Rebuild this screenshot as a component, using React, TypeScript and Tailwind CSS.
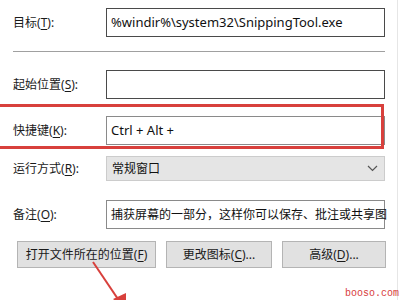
import React from "react";

const cjk = { fontFamily: '"Noto Sans", "Noto Sans CJK SC", sans-serif' };

const Key = ({ k }: { k: string }) => <span className="underline underline-offset-2">{k}</span>;

const Label = ({ text, k }: { text: string; k: string }) => (
    <div className="w-[106px] shrink-0 text-[12px] text-[#1a1a1a] pl-[13px]">
        {text}(<Key k={k} />):
    </div>
);

const Row = ({ children, className = "" }: { children: React.ReactNode; className?: string }) => (
    <div className={"flex items-center " + className}>{children}</div>
);

const Box = ({ children, className = "" }: { children?: React.ReactNode; className?: string }) => (
    <div className={"w-[279px] h-[29px] flex items-center px-[4px] text-[13px] text-[#111] bg-white border " + className}>
        {children}
    </div>
);

const Btn = ({ text, k, w, suffix = "" }: { text: string; k: string; w: string; suffix?: string }) => (
    <div className={"h-[27px] flex items-center justify-center bg-[#e1e1e1] border border-[#b4b4b4] text-[12px] text-[#1a1a1a] " + w}>
        {text}(<Key k={k} />){suffix}
    </div>
);

const App = () => {
    return (
        <div className="relative w-[400px] h-[300px] bg-white overflow-hidden" style={cjk}>
            <div className="absolute right-[2px] top-0 h-full w-px bg-[#e6e6e6]" />
            <div className="flex flex-col pt-[8px]">
                <Row>
                    <Label text="目标" k="T" />
                    <Box className="border-[#4a4a4a]">%windir%\system32\SnippingTool.exe</Box>
                </Row>
                <div className="h-px bg-[#a0a0a0] ml-[13px] w-[372px] mt-[14px]" />
                <Row className="mt-[18px]">
                    <Label text="起始位置" k="S" />
                    <Box className="border-[#4a4a4a]" />
                </Row>
                <Row className="mt-[17px]">
                    <Label text="快捷键" k="K" />
                    <Box className="border-[#8a8a8a]">Ctrl + Alt +</Box>
                </Row>
                <Row className="mt-[11px]">
                    <Label text="运行方式" k="R" />
                    <div className="w-[279px] h-[25px] flex items-center justify-between pl-[5px] pr-[6px] bg-[#e5e5e5] border border-[#cccccc] text-[12px] text-[#111]">
                        常规窗口
                        <svg width="11" height="7" viewBox="0 0 11 7" fill="none" stroke="#555" strokeWidth="1.2">
                            <path d="M1 1l4.5 4.5L10 1" />
                        </svg>
                    </div>
                </Row>
                <Row className="mt-[19px]">
                    <Label text="备注" k="O" />
                    <div className="w-[279px] h-[29px] flex items-center px-[4px] text-[12px] text-[#111] bg-white border border-[#8a8a8a] whitespace-nowrap">
                        捕获屏幕的一部分，这样你可以保存、批注或共享图
                    </div>
                </Row>
                <div className="flex gap-[10px] pl-[17px] mt-[12px]">
                    <Btn text="打开文件所在的位置" k="F" w="w-[139px]" />
                    <Btn text="更改图标" k="C" w="w-[106px]" suffix="..." />
                    <Btn text="高级" k="D" w="w-[104px]" suffix="..." />
                </div>
            </div>
            <div className="absolute left-[-4px] top-[104px] w-[388px] h-[45px] border-[3px] border-[#d8403c]" />
            <svg className="absolute left-0 top-0" width="400" height="300" viewBox="0 0 400 300">
                <line x1="93" y1="262" x2="124" y2="308" stroke="#d8403c" strokeWidth="2" />
                <path d="M113 299 L126 310 L126 293 Z" fill="#d8403c" />
            </svg>
            <div className="absolute left-[345px] top-[286px] text-[10px] text-[#d8403c]" style={{ fontFamily: '"Liberation Mono", monospace' }}>
                booso.com
            </div>
        </div>
    );
};

export default App;
